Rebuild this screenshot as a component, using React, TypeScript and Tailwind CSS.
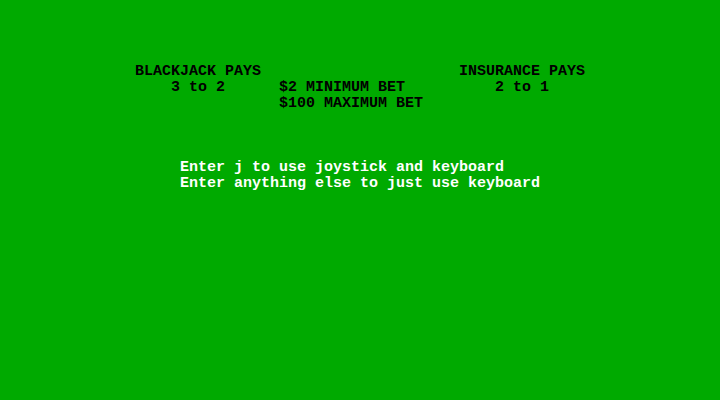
import React from "react";

type Line = { text: string; color: "black" | "white" };

const rows: (Line | null)[] = [
    null,
    null,
    null,
    null,
    { text: " ".repeat(15) + "BLACKJACK PAYS" + " ".repeat(22) + "INSURANCE PAYS", color: "black" },
    { text: " ".repeat(19) + "3 to 2" + " ".repeat(6) + "$2 MINIMUM BET" + " ".repeat(10) + "2 to 1", color: "black" },
    { text: " ".repeat(31) + "$100 MAXIMUM BET", color: "black" },
    null,
    null,
    null,
    { text: " ".repeat(20) + "Enter j to use joystick and keyboard", color: "white" },
    { text: " ".repeat(20) + "Enter anything else to just use keyboard", color: "white" },
];

const App = () => {
    return (
        <div className="w-[720px] h-[400px] bg-[#00aa00] overflow-hidden">
            <div className="flex flex-col font-['Liberation_Mono',monospace] font-bold text-[15px] leading-[16px] whitespace-pre">
                {rows.map((row, i) => (
                    <div
                        key={i}
                        className={
                            "h-[16px] " +
                            (row?.color === "white" ? "text-white" : "text-black")
                        }
                    >
                        {row ? row.text : " "}
                    </div>
                ))}
            </div>
        </div>
    );
};
export default App;
